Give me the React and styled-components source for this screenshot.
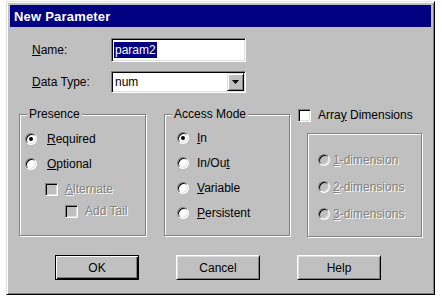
import styled, { createGlobalStyle } from "styled-components";

const Global = createGlobalStyle`
  body {
    margin: 0;
    background: #fff;
  }
`;

const Dialog = styled.div`
  margin: 1px 0 0 6px;
  width: 429px;
  box-sizing: border-box;
  padding: 3px;
  background: #c0c0c0;
  border: 1px solid;
  border-color: #dfdfdf #000 #000 #dfdfdf;
  box-shadow: inset 1px 1px #fff, inset -1px -1px #808080;
  font-family: "Liberation Sans", Arial, sans-serif;
  font-size: 12px;
  color: #000;
`;

const TitleBar = styled.div`
  height: 22px;
  display: flex;
  align-items: center;
  padding-left: 4px;
  background: #000080;
  color: #fff;
  font-weight: bold;
  font-size: 13px;
  letter-spacing: 0.2px;
`;

const Body = styled.div`
  display: flex;
  flex-direction: column;
  padding-bottom: 11px;
`;

const FieldRow = styled.div`
  display: flex;
  align-items: center;
  margin-top: ${(p) => p.$top}px;
  padding-left: 22px;
`;

const FieldLabel = styled.div`
  width: 79px;
`;

const Sunken = styled.div`
  width: 135px;
  height: ${(p) => p.$h}px;
  box-sizing: border-box;
  padding: 1px;
  display: flex;
  align-items: center;
  background: #fff;
  border: 1px solid;
  border-color: #808080 #fff #fff #808080;
  box-shadow: inset 1px 1px #000, inset -1px -1px #dfdfdf;
`;

const Selected = styled.span`
  margin-left: 1px;
  padding: 0 1px;
  line-height: 16px;
  background: #000080;
  color: #fff;
`;

const ComboText = styled.span`
  flex: 1;
  padding-left: 2px;
`;

const DropButton = styled.div`
  width: 17px;
  height: 18px;
  box-sizing: border-box;
  display: flex;
  align-items: center;
  justify-content: center;
  background: #c0c0c0;
  border: 1px solid;
  border-color: #dfdfdf #000 #000 #dfdfdf;
  box-shadow: inset 1px 1px #fff, inset -1px -1px #808080;
`;

const GroupsRow = styled.div`
  display: flex;
  align-items: flex-start;
  margin-top: 14px;
  padding-left: 9px;
`;

const GroupBox = styled.div`
  position: relative;
  width: ${(p) => p.$w}px;
  height: ${(p) => p.$h}px;
  box-sizing: border-box;
  margin: ${(p) => p.$margin};
  padding: ${(p) => p.$pad};
  display: flex;
  flex-direction: column;
  gap: ${(p) => p.$gap}px;
  border: 1px solid #808080;
  box-shadow: 1px 1px #fff, inset 1px 1px #fff;
`;

const Legend = styled.span`
  position: absolute;
  top: -9px;
  left: 7px;
  padding: 0 2px;
  line-height: 16px;
  background: #c0c0c0;
`;

const ArrayColumn = styled.div`
  display: flex;
  flex-direction: column;
  margin-left: 8px;
`;

const Option = styled.div`
  display: flex;
  align-items: center;
  height: 16px;
  margin-top: ${(p) => p.$top || 0}px;
  padding-left: ${(p) => p.$indent || 0}px;
  gap: ${(p) => p.$gap}px;
  color: ${(p) => (p.$disabled ? "#808080" : "#000")};
  text-shadow: ${(p) => (p.$disabled ? "1px 1px 0 #fff" : "none")};
`;

const Radio = styled.span`
  position: relative;
  flex: none;
  width: 12px;
  height: 12px;
  box-sizing: border-box;
  border-radius: 50%;
  border: 1px solid;
  border-color: #808080 #fff #fff #808080;
  box-shadow: inset 1px 1px #000, inset -1px -1px #dfdfdf;
  background: ${(p) => (p.$disabled ? "#c0c0c0" : "#fff")};

  &::after {
    content: "";
    display: ${(p) => (p.$checked ? "block" : "none")};
    position: absolute;
    left: 3px;
    top: 3px;
    width: 4px;
    height: 4px;
    border-radius: 50%;
    background: #000;
  }
`;

const Check = styled.span`
  flex: none;
  width: 13px;
  height: 13px;
  box-sizing: border-box;
  border: 1px solid;
  border-color: #808080 #fff #fff #808080;
  box-shadow: inset 1px 1px #000, inset -1px -1px #dfdfdf;
  background: ${(p) => (p.$disabled ? "#c0c0c0" : "#fff")};
`;

const ButtonRow = styled.div`
  display: flex;
  gap: 37px;
  margin-top: 18px;
  padding-left: 45px;
`;

const Button = styled.button`
  width: 84px;
  height: 25px;
  box-sizing: border-box;
  padding: 0;
  font: inherit;
  color: #000;
  background: #c0c0c0;
  border: 1px solid;
  border-color: ${(p) => (p.$default ? "#000" : "#fff #000 #000 #fff")};
  box-shadow: ${(p) =>
    p.$default
      ? "inset 1px 1px #fff, inset -1px -1px #000, inset -2px -2px #808080"
      : "inset 1px 1px #dfdfdf, inset -1px -1px #808080"};
`;

const presence = [
  { key: "R", rest: "equired", type: "radio", checked: true, indent: 5, gap: 10, top: 0 },
  { key: "O", rest: "ptional", type: "radio", indent: 5, gap: 10, top: 9 },
  { key: "A", rest: "lternate", type: "check", disabled: true, indent: 25, gap: 7, top: 9 },
  { pre: "Add Tail", type: "check", disabled: true, indent: 45, gap: 7, top: 6 },
];

const access = [
  { key: "I", rest: "n", checked: true },
  { pre: "In/Ou", key: "t" },
  { key: "V", rest: "ariable" },
  { key: "P", rest: "ersistent" },
];

const dims = [
  { key: "1", rest: "-dimension" },
  { key: "2", rest: "-dimensions" },
  { key: "3", rest: "-dimensions" },
];

const Label = ({ pre, k, rest }) => (
  <span>
    {pre}
    {k && <u>{k}</u>}
    {rest}
  </span>
);

const App = () => (
  <>
    <Global />
    <Dialog>
      <TitleBar>New Parameter</TitleBar>
      <Body>
        <FieldRow $top={11}>
          <FieldLabel>
            <u>N</u>ame:
          </FieldLabel>
          <Sunken $h={24}>
            <Selected>param2</Selected>
          </Sunken>
        </FieldRow>
        <FieldRow $top={9}>
          <FieldLabel>
            <u>D</u>ata Type:
          </FieldLabel>
          <Sunken $h={22}>
            <ComboText>num</ComboText>
            <DropButton>
              <svg width="7" height="4" viewBox="0 0 7 4">
                <polygon points="0,0 7,0 3.5,4" fill="#000" />
              </svg>
            </DropButton>
          </Sunken>
        </FieldRow>

        <GroupsRow>
          <GroupBox $w={127} $h={122} $margin="7px 0 0 0" $pad="16px 0 0 0" $gap={0}>
            <Legend>Presence</Legend>
            {presence.map((o) => (
              <Option
                key={o.pre || o.key}
                $indent={o.indent}
                $gap={o.gap}
                $top={o.top}
                $disabled={o.disabled}
              >
                {o.type === "radio" ? <Radio $checked={o.checked} /> : <Check $disabled />}
                <Label pre={o.pre} k={o.key} rest={o.rest} />
              </Option>
            ))}
          </GroupBox>

          <GroupBox $w={126} $h={122} $margin="7px 0 0 18px" $pad="15px 0 0 12px" $gap={9}>
            <Legend>Access Mode</Legend>
            {access.map((o) => (
              <Option key={(o.pre || "") + o.key} $gap={8}>
                <Radio $checked={o.checked} />
                <Label pre={o.pre} k={o.key} rest={o.rest} />
              </Option>
            ))}
          </GroupBox>

          <ArrayColumn>
            <Option $gap={7}>
              <Check />
              <Label pre="Arra" k="y" rest=" Dimensions" />
            </Option>
            <GroupBox $w={115} $h={104} $margin="10px 0 0 9px" $pad="18px 0 0 10px" $gap={11}>
              {dims.map((o) => (
                <Option key={o.key} $gap={3} $disabled>
                  <Radio $disabled />
                  <Label k={o.key} rest={o.rest} />
                </Option>
              ))}
            </GroupBox>
          </ArrayColumn>
        </GroupsRow>

        <ButtonRow>
          <Button $default>OK</Button>
          <Button>Cancel</Button>
          <Button>Help</Button>
        </ButtonRow>
      </Body>
    </Dialog>
  </>
);

export default App;
